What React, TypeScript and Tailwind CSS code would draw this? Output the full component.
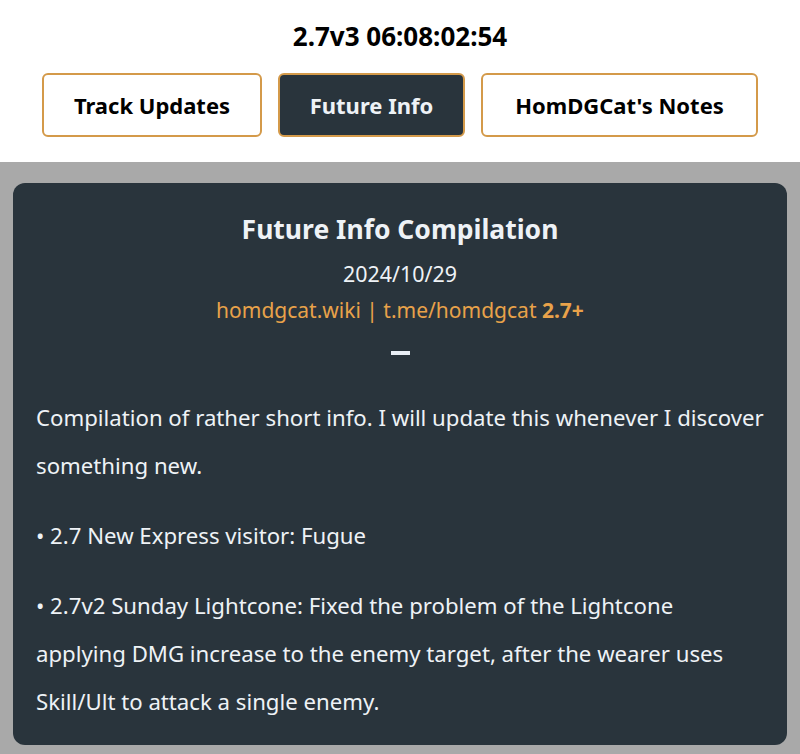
export default function App() {
  return (
    <div className="min-h-[754px] bg-[#a9a9a9] font-['Noto_Sans',sans-serif]">
      <div className="bg-white pt-[20px] pb-[25px]">
        <h1 className="text-center text-[26px] leading-[32px] font-bold text-black">2.7v3 06:08:02:54</h1>
        <div className="mt-[21px] flex justify-center gap-4">
          <TabButton label="Track Updates" width="w-[220px]" />
          <TabButton label="Future Info" width="w-[187px]" active />
          <TabButton label="HomDGCat's Notes" width="w-[277px]" />
        </div>
      </div>

      <div className="px-[13px] pt-[21px] pb-[9px]">
        <div className="rounded-xl bg-[#29343c] px-[23px] pt-[28px] pb-[19px] text-[#eef2f6]">
          <h2 className="text-center text-[26.5px] leading-[36px] font-bold">Future Info Compilation</h2>
          <p className="mt-[13px] text-center text-[21.4px] leading-[28px]">2024/10/29</p>
          <p className="mt-[8px] text-center text-[21px] leading-[28px] text-[#e8a24a]">
            homdgcat.wiki | t.me/homdgcat <span className="font-bold">2.7+</span>
          </p>
          <div className="mx-auto mt-[27px] h-[4px] w-[19px] bg-[#e8eef5]" />

          <div className="mt-[39px] space-y-[22px] text-[22.2px] leading-[48px] whitespace-nowrap">
            <p>
              Compilation of rather short info. I will update this whenever I discover
              <br />
              something new.
            </p>
            <p>• 2.7 New Express visitor: Fugue</p>
            <p>
              • 2.7v2 Sunday Lightcone: Fixed the problem of the Lightcone
              <br />
              applying DMG increase to the enemy target, after the wearer uses
              <br />
              Skill/Ult to attack a single enemy.
            </p>
          </div>
        </div>
      </div>
    </div>
  );
}

function TabButton({ label, width, active }: { label: string; width: string; active?: boolean }) {
  return (
    <button
      className={`${width} h-[64px] rounded-md border-2 border-[#d49a4a] text-[22px] font-bold ${
        active ? "bg-[#29343c] text-[#eef2f6]" : "bg-white text-black"
      }`}
    >
      {label}
    </button>
  );
}
